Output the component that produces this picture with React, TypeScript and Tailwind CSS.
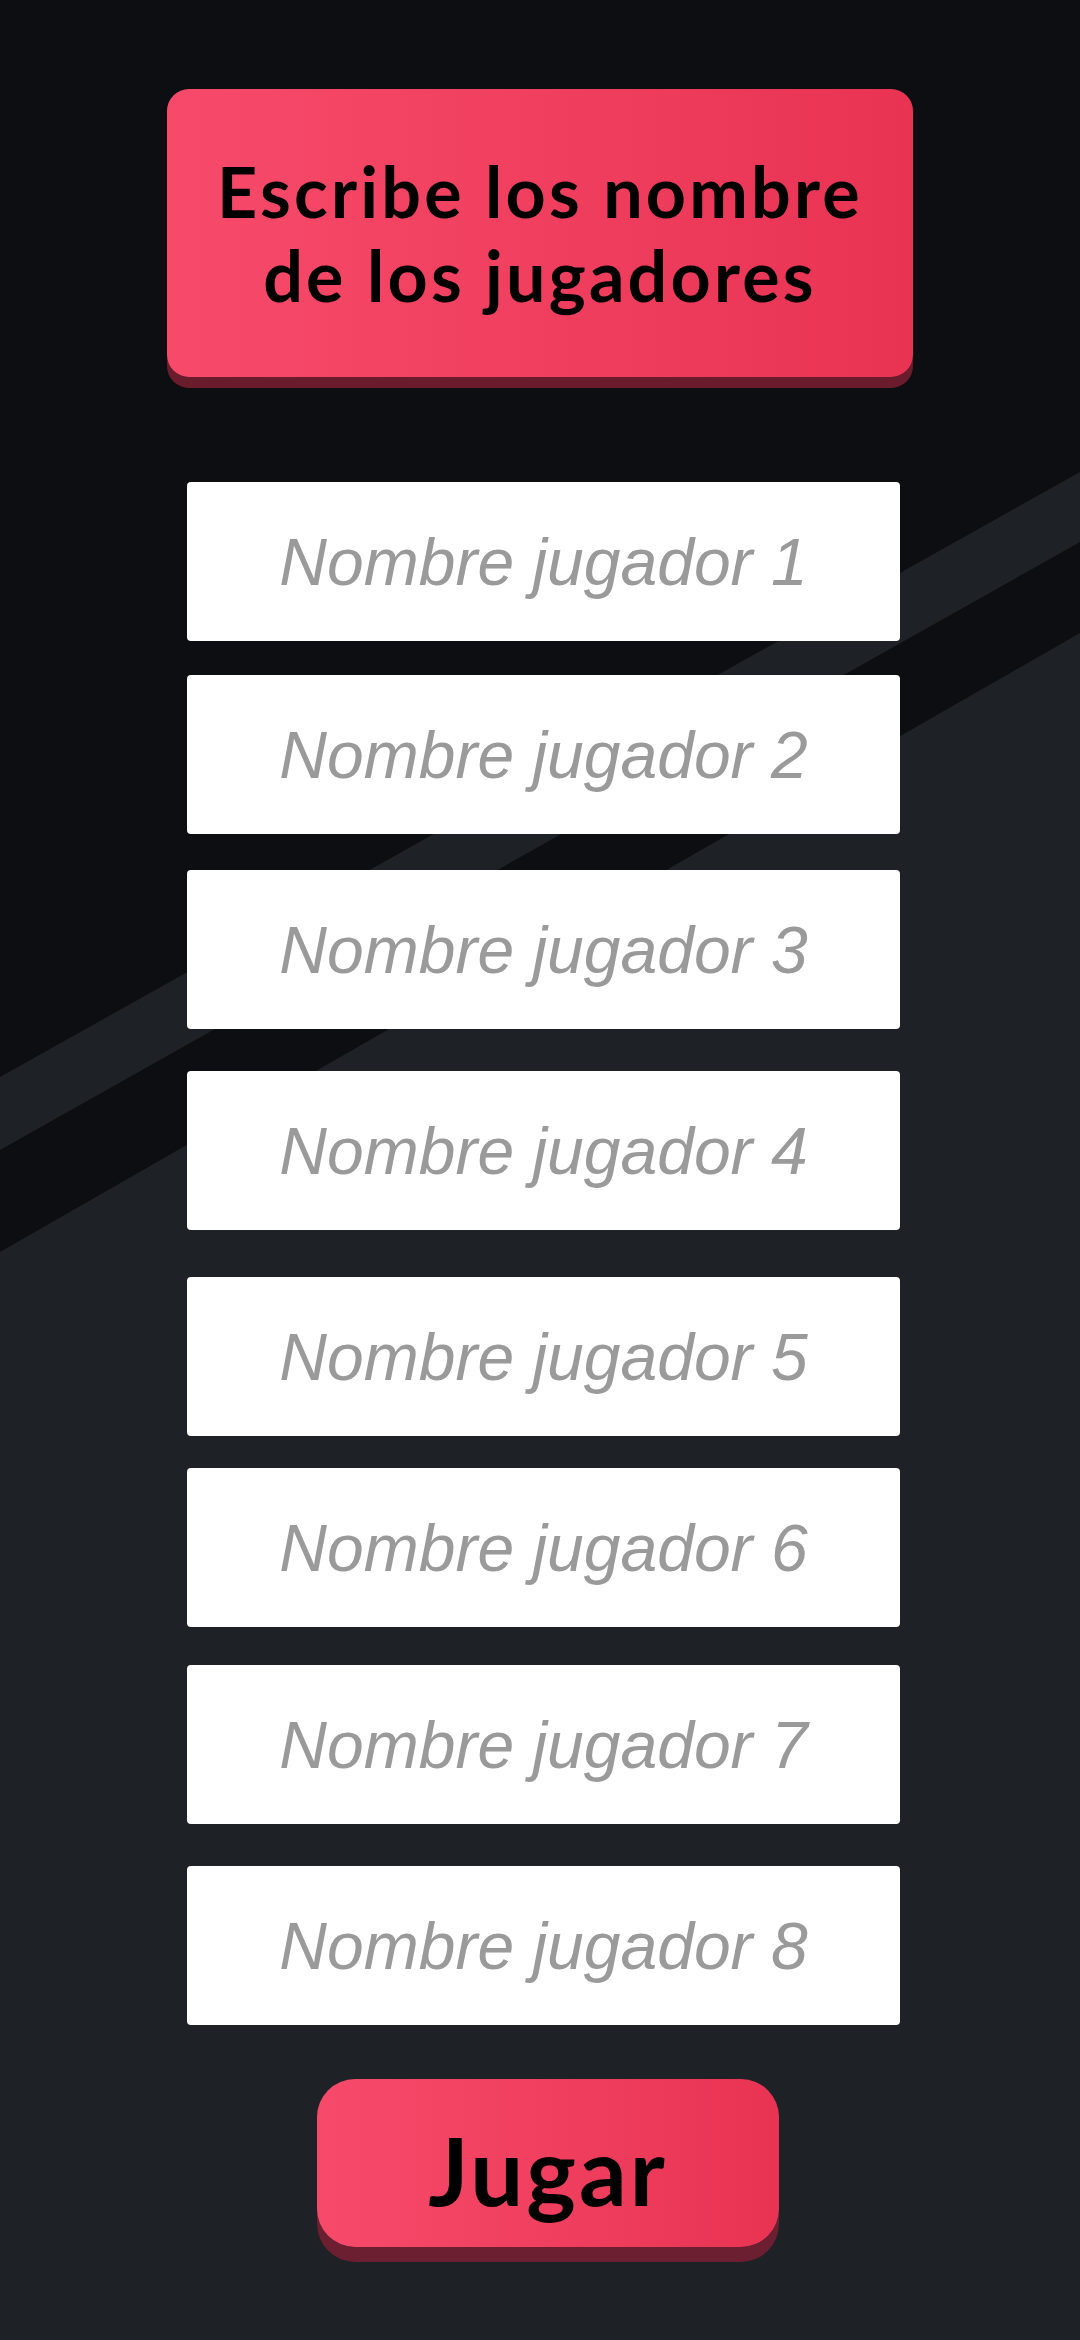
import { useState } from "react";

const players = [
  { n: 1, mt: "mt-0" },
  { n: 2, mt: "mt-[34px]" },
  { n: 3, mt: "mt-[36px]" },
  { n: 4, mt: "mt-[42px]" },
  { n: 5, mt: "mt-[47px]" },
  { n: 6, mt: "mt-[32px]" },
  { n: 7, mt: "mt-[38px]" },
  { n: 8, mt: "mt-[42px]" },
];

function Background() {
  return (
    <svg
      className="absolute inset-0 w-full h-full pointer-events-none"
      viewBox="0 0 1080 2340"
      preserveAspectRatio="none"
    >
      <rect x="0" y="0" width="1080" height="2340" fill="#1e2226" />
      <polygon points="0,0 1080,0 1080,472 0,1077" fill="#0c0e11" />
      <polygon points="1080,542 1080,633 0,1252 0,1150" fill="#0c0e11" />
    </svg>
  );
}

export default function App() {
  const [names, setNames] = useState<string[]>(Array(8).fill(""));

  const handleChange = (i: number, value: string) => {
    setNames((prev) => prev.map((v, j) => (j === i ? value : v)));
  };

  return (
    <div className="relative w-[1080px] min-h-[2340px] overflow-hidden bg-[#1e2226]">
      <Background />

      <div className="relative flex flex-col">
        {/* Header */}
        <div className="mt-[89px] ml-[167px] w-[746px] h-[288px] rounded-[22px] bg-gradient-to-r from-[#f74a6a] to-[#e93353] shadow-[0_11px_0_#6b1c2c] flex items-center justify-center">
          <h1
            className="text-black text-center font-bold text-[70px] leading-[84px] tracking-[3.2px]"
            style={{ fontFamily: "Lato, 'Noto Sans', sans-serif" }}
          >
            Escribe los nombre
            <br />
            de los jugadores
          </h1>
        </div>

        {/* Player inputs */}
        <div className="mt-[105px] ml-[187px] w-[713px] flex flex-col">
          {players.map((p, i) => (
            <input
              key={p.n}
              type="text"
              value={names[i]}
              onChange={(e) => handleChange(i, e.target.value)}
              placeholder={`Nombre jugador ${p.n}`}
              className={`${p.mt} w-full h-[159px] bg-white rounded-[4px] text-center text-[66px] text-[#444] placeholder:text-[#9a9a9a] placeholder:italic italic outline-none`}
              style={{ fontFamily: "'Liberation Sans', Arial, sans-serif" }}
            />
          ))}
        </div>

        {/* Play button */}
        <button
          className="mt-[54px] ml-[317px] w-[462px] h-[168px] rounded-[38px] bg-gradient-to-r from-[#f74a6a] to-[#e93353] shadow-[0_15px_0_#6b1f30] flex items-center justify-center pt-[14px]"
        >
          <span
            className="text-black font-bold text-[94px] leading-none tracking-[3px]"
            style={{ fontFamily: "Lato, 'Noto Sans', sans-serif" }}
          >
            Jugar
          </span>
        </button>
      </div>
    </div>
  );
}
